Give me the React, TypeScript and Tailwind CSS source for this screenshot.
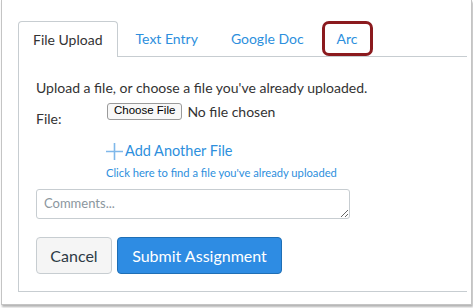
import React from "react";

const tabs = ["File Upload", "Text Entry", "Google Doc", "Arc"];

export default function App() {
    return (
        <div className="w-[473px] h-[308px] bg-white font-['Lato','Liberation_Sans',sans-serif] text-[#333333]">
            <div className="ml-[1px] w-[471px] h-[305px] border-x border-b border-[#c4c4c4] shadow-[1px_2px_2px_rgba(0,0,0,0.3)] pl-[16px] pt-[21px]">
                <div className="w-[449px]">
                    {/* tab strip */}
                    <div className="flex gap-[3px] h-[36px] border-b border-[#c7cdd1] items-end">
                        {tabs.map((t, i) =>
                            i === 0 ? (
                                <div
                                    key={t}
                                    className="h-[36px] -mb-px px-[14px] flex items-center border border-b-0 border-[#c7cdd1] rounded-t-[4px] bg-white text-[14px] text-[#333333]"
                                >
                                    {t}
                                </div>
                            ) : (
                                <div key={t} className="relative h-[35px] px-[15px] flex items-center text-[14px] text-[#2d8fdd]">
                                    {t}
                                    {t === "Arc" && (
                                        <span className="absolute inset-0 border-[3px] border-[#8b1a1e] rounded-[7px]" />
                                    )}
                                </div>
                            )
                        )}
                    </div>

                    {/* body */}
                    <div className="h-[235px] border-l border-b border-[#c7cdd1] pl-[17px] pt-[21px]">
                        <p className="text-[14px] leading-[20px]">Upload a file, or choose a file you've already uploaded.</p>

                        <div className="flex mt-[4px]">
                            <div className="w-[71px] pt-[7px] text-[14px] leading-[20px]">File:</div>
                            <div className="flex items-center gap-[5px] h-[18px]">
                                <button className="h-[17px] px-[6px] border border-[#9a9a9a] rounded-[3px] bg-[#f8f8f8] font-['Liberation_Sans',sans-serif] text-[11.5px] leading-none text-black">
                                    Choose File
                                </button>
                                <span className="text-[14px]">No file chosen</span>
                            </div>
                        </div>

                        <div className="ml-[70px] mt-[13px]">
                            <div className="flex items-center h-[18px] text-[14.5px] text-[#2d8fdd]">
                                <svg width="17" height="17" viewBox="0 0 17 17" className="mr-[2px]">
                                    <path d="M8.5 0v17M0 8.5h17" stroke="#7fb8ea" strokeWidth="1.6" />
                                </svg>
                                Add Another File
                            </div>
                            <div className="mt-[6px] text-[11.2px] leading-[14px] text-[#2d8fdd]">
                                Click here to find a file you've already uploaded
                            </div>
                        </div>

                        <textarea
                            placeholder="Comments..."
                            className="block mt-[9px] w-[314px] h-[30px] border border-[#c7cdd1] rounded-[3px] px-[7px] py-[4px] text-[13px] leading-[18px] placeholder:text-[#8b969e] outline-none"
                        />

                        <div className="flex gap-[5px] mt-[18px]">
                            <button className="w-[76px] h-[37px] border border-[#c7cdd1] rounded-[4px] bg-[#f5f5f5] text-[16px] text-[#2d3b45]">
                                Cancel
                            </button>
                            <button className="w-[165px] h-[37px] border border-[#1f6fb5] rounded-[4px] bg-[#2e8ce3] text-[16px] text-white">
                                Submit Assignment
                            </button>
                        </div>
                    </div>
                </div>
            </div>
        </div>
    );
}
